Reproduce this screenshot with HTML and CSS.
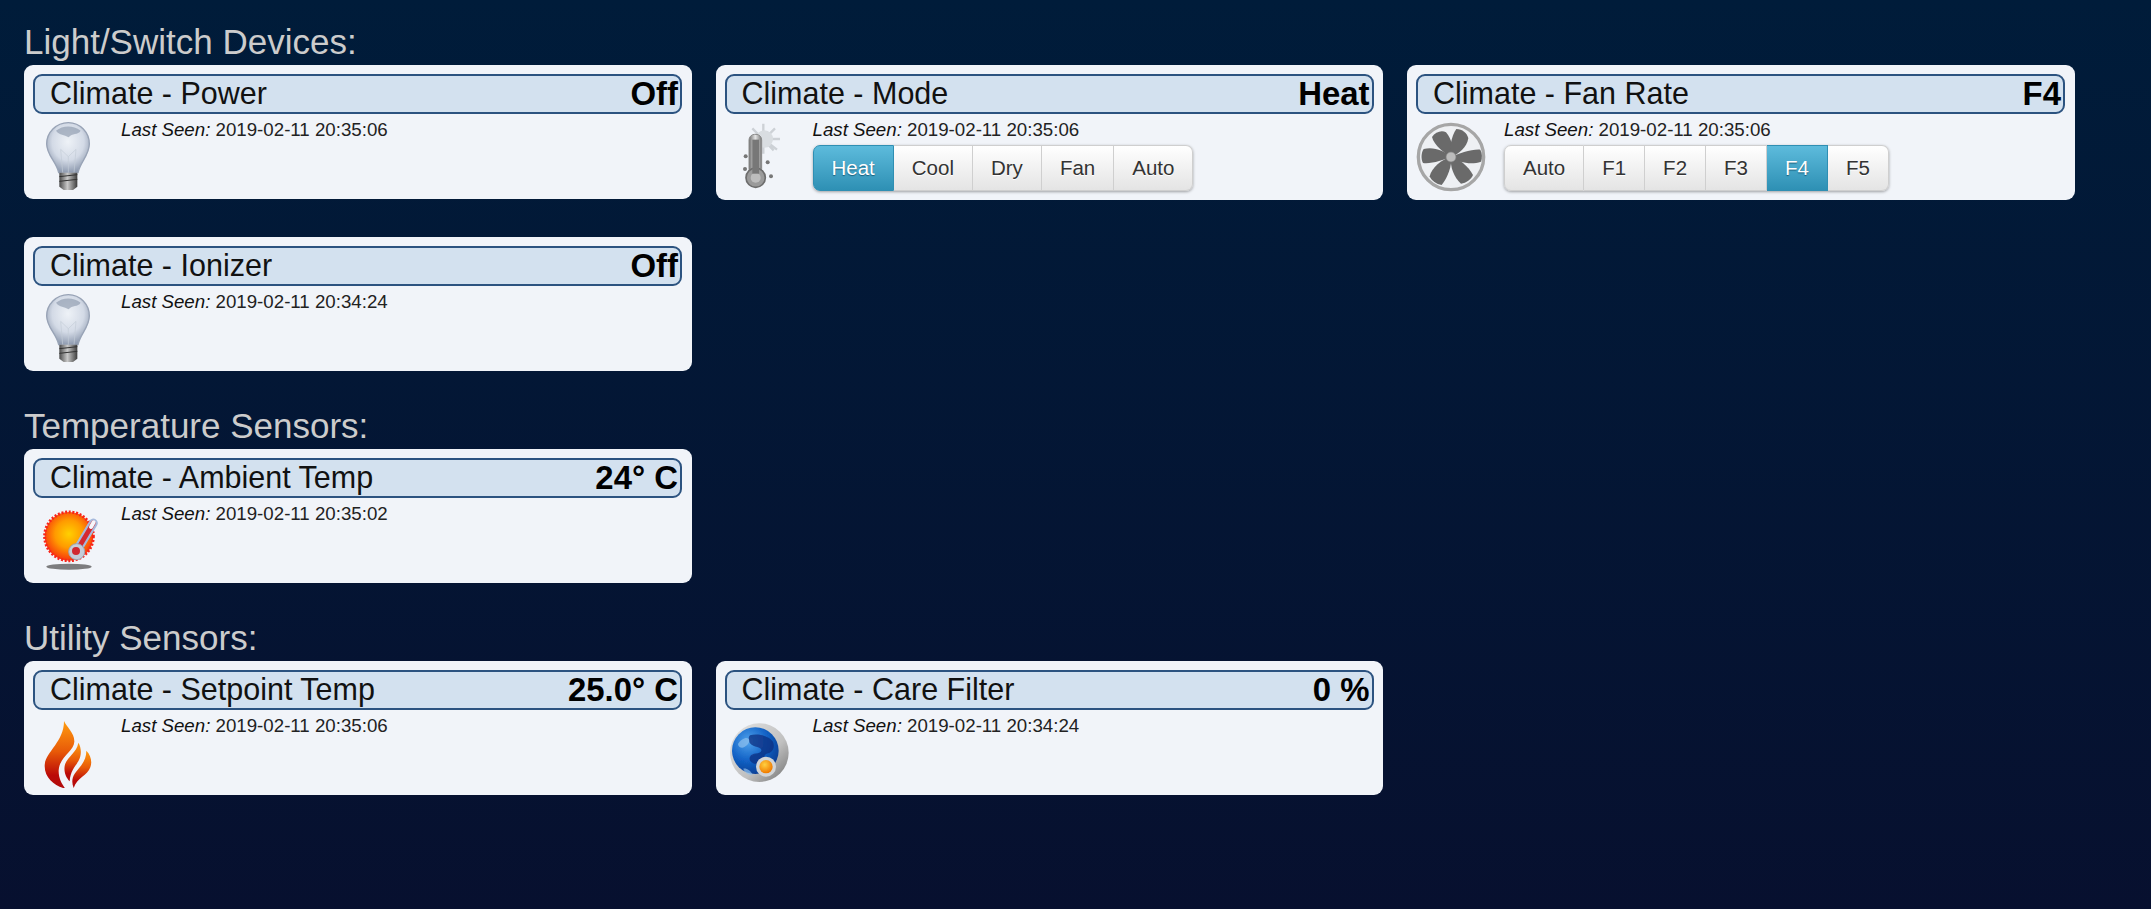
FILE: index.html
```html
<!DOCTYPE html>
<html lang="en">
<head>
<meta charset="utf-8">
<title>Climate</title>
<link rel="stylesheet" href="styles.css">
</head>
<body>
<svg class="defs" width="0" height="0" aria-hidden="true">
  <defs>
    <radialGradient id="glass" cx="50%" cy="38%" r="62%">
      <stop offset="0" stop-color="#eef2f7"/><stop offset=".6" stop-color="#d3dae6"/><stop offset="1" stop-color="#8f9bb0"/>
    </radialGradient>
    <linearGradient id="base" x1="0" x2="1" y1="0" y2="0">
      <stop offset="0" stop-color="#4a4a4a"/><stop offset=".45" stop-color="#c8c8c8"/><stop offset="1" stop-color="#3e3e3e"/>
    </linearGradient>
    <linearGradient id="tube" x1="0" x2="1" y1="0" y2="0">
      <stop offset="0" stop-color="#6e6e6e"/><stop offset=".5" stop-color="#e4e4e4"/><stop offset="1" stop-color="#777"/>
    </linearGradient>
    <radialGradient id="sunfill" cx="50%" cy="45%" r="52%">
      <stop offset="0" stop-color="#ffd000"/><stop offset=".55" stop-color="#ff9a00"/><stop offset="1" stop-color="#f8400c"/>
    </radialGradient>
    <linearGradient id="fire" x1="0" x2="0" y1="0" y2="1">
      <stop offset="0" stop-color="#ff9c10"/><stop offset=".45" stop-color="#e85a08"/><stop offset=".8" stop-color="#bb0a08"/><stop offset="1" stop-color="#b00c0c"/>
    </linearGradient>
    <radialGradient id="globe" cx="35%" cy="30%" r="75%">
      <stop offset="0" stop-color="#4fa2ec"/><stop offset=".55" stop-color="#1262c6"/><stop offset="1" stop-color="#0c3d92"/>
    </radialGradient>
    <linearGradient id="rim" x1="0" x2="1" y1="0" y2="1">
      <stop offset="0" stop-color="#e4e4e4"/><stop offset=".6" stop-color="#c0c0c0"/><stop offset="1" stop-color="#707070"/>
    </linearGradient>
    <radialGradient id="orange" cx="40%" cy="35%" r="65%">
      <stop offset="0" stop-color="#ffd040"/><stop offset="1" stop-color="#f07a00"/>
    </radialGradient>
    <filter id="soft" x="-10%" y="-10%" width="120%" height="120%"><feGaussianBlur stdDeviation="1.8"/></filter>
    <symbol id="bulb" viewBox="39 36 210 210">
      <g filter="url(#soft)">
        <path d="M145 38C108 38 80 68 80 102c0 34 30 54 36 86h58c6-32 34-52 34-86 0-34-27-64-63-64z" fill="url(#glass)" stroke="#98a3b6" stroke-width="4"/>
        <path d="M108 62c20-16 50-18 74 0-8 14-26 6-36 20-14-10-26-4-38-20z" fill="#8794a8" opacity=".6"/>
        <path d="M128 188l-6-70 23 22 23-22-6 70M145 140v48" fill="none" stroke="#c3cbd7" stroke-width="2"/>
        <path d="M118 188h54v42l-13 10h-28l-13-10z" fill="url(#base)"/>
        <path d="M118 200l54-6M118 214l54-6" stroke="#333" stroke-width="3"/>
      </g>
    </symbol>
  </defs>
</svg>

<section class="group">
  <h2 class="group-title">Light/Switch Devices:</h2>
  <div class="cards">
    <article class="card">
      <header class="bar"><span class="name">Climate - Power</span><span class="value">Off</span></header>
      <div class="body">
        <svg class="icon"><use href="#bulb"/></svg>
        <div class="info"><p class="seen"><em>Last Seen:</em> 2019-02-11 20:35:06</p></div>
      </div>
    </article>
    <article class="card">
      <header class="bar"><span class="name">Climate - Mode</span><span class="value">Heat</span></header>
      <div class="body">
        <svg class="icon" viewBox="0 21 210 210">
          <g filter="url(#soft)">
            <g stroke="#cdd1d6" stroke-width="7">
              <path d="M115 26v90M82 40l64 66M150 40l-60 60M165 72H90M156 104l-46-36"/>
            </g>
            <circle cx="118" cy="72" r="26" fill="#d9dde1"/>
            <rect x="72" y="58" width="38" height="120" rx="17" fill="url(#tube)" stroke="#8a8a8a" stroke-width="3"/>
            <circle cx="92" cy="188" r="29" fill="#9a9a9a" stroke="#6d6d6d" stroke-width="5"/>
            <circle cx="92" cy="188" r="15" fill="#bdbdbd"/>
            <rect x="82" y="74" width="20" height="102" fill="#777"/>
            <g fill="#777"><circle cx="62" cy="124" r="6"/><circle cx="60" cy="162" r="6"/><circle cx="128" cy="142" r="6"/><circle cx="138" cy="184" r="6"/></g>
          </g>
        </svg>
        <div class="info">
          <p class="seen"><em>Last Seen:</em> 2019-02-11 20:35:06</p>
          <div class="btns"><button class="btn on">Heat</button><button class="btn">Cool</button><button class="btn">Dry</button><button class="btn">Fan</button><button class="btn">Auto</button></div>
        </div>
      </div>
    </article>
    <article class="card">
      <header class="bar"><span class="name">Climate - Fan Rate</span><span class="value">F4</span></header>
      <div class="body">
        <svg class="icon" viewBox="18 21 210 210">
          <g filter="url(#soft)">
            <circle cx="123" cy="126" r="98" fill="#eef0f3" stroke="#a6a6a6" stroke-width="10"/>
            <g fill="#6a6a6a">
              <path d="M123 126C106 116 72 92 66 66c10-16 30-22 42-14 18 20 24 52 15 74z"/>
              <path d="M123 126c-6-22 0-62 16-84 18 0 32 12 36 28-4 26-28 48-52 56z"/>
              <path d="M123 126c22-10 62-24 88-22 6 12 6 24 2 36-28 10-66 4-90-14z"/>
              <path d="M123 126c22 2 52 28 66 54-6 14-20 24-36 26-20-16-34-52-30-80z"/>
              <path d="M123 126c4 24-10 62-28 84-16-2-30-12-36-26 6-26 36-52 64-58z"/>
              <path d="M123 126c-22 8-60 22-84 18-6-12-6-30 2-42 28-8 62 4 82 24z"/>
            </g>
            <circle cx="123" cy="126" r="15" fill="#bcbcbc" stroke="#808080" stroke-width="2"/>
          </g>
        </svg>
        <div class="info">
          <p class="seen"><em>Last Seen:</em> 2019-02-11 20:35:06</p>
          <div class="btns"><button class="btn">Auto</button><button class="btn">F1</button><button class="btn">F2</button><button class="btn">F3</button><button class="btn on">F4</button><button class="btn">F5</button></div>
        </div>
      </div>
    </article>
    <article class="card">
      <header class="bar"><span class="name">Climate - Ionizer</span><span class="value">Off</span></header>
      <div class="body">
        <svg class="icon"><use href="#bulb"/></svg>
        <div class="info"><p class="seen"><em>Last Seen:</em> 2019-02-11 20:34:24</p></div>
      </div>
    </article>
  </div>
</section>

<section class="group">
  <h2 class="group-title">Temperature Sensors:</h2>
  <div class="cards">
    <article class="card">
      <header class="bar"><span class="name">Climate - Ambient Temp</span><span class="value">24° C</span></header>
      <div class="body">
        <svg class="icon" viewBox="24 15 210 210">
          <ellipse cx="132" cy="197" rx="68" ry="9" fill="#555" opacity=".75" filter="url(#soft)"/>
          <circle cx="132" cy="106" r="73" fill="url(#sunfill)" stroke="#f8241c" stroke-width="9" stroke-dasharray="6 5"/>
          <path d="M155 150L205 66" stroke="#a6b9dc" stroke-width="27" stroke-linecap="round" fill="none"/>
          <path d="M155 150L205 66" stroke="#d52a30" stroke-width="14" stroke-linecap="round" fill="none"/>
          <path d="M198 78L206 64" stroke="#f6f6fa" stroke-width="12" stroke-linecap="round" fill="none"/>
          <circle cx="155" cy="152" r="24" fill="#c5ccd8" stroke="#9aa3b2" stroke-width="3"/>
          <circle cx="153" cy="150" r="12" fill="#d02830"/>
        </svg>
        <div class="info"><p class="seen"><em>Last Seen:</em> 2019-02-11 20:35:02</p></div>
      </div>
    </article>
  </div>
</section>

<section class="group">
  <h2 class="group-title">Utility Sensors:</h2>
  <div class="cards">
    <article class="card">
      <header class="bar"><span class="name">Climate - Setpoint Temp</span><span class="value">25.0° C</span></header>
      <div class="body">
        <svg class="icon" viewBox="24 6 210 210">
          <g fill="url(#fire)">
            <path d="M117 15c8 18 32 36 31 62-2 30-44 44-47 86-1 24 10 42 20 55-30-8-62-30-62-68 0-42 58-70 58-135z"/>
            <path d="M160 80c10 16 10 38 0 56-10 16-24 30-26 60-10-10-18-26-15-46 4-26 36-38 41-70z"/>
            <path d="M184 104c14 14 18 34 12 50-8 24-40 32-50 62-6-14-6-30 4-44 12-18 34-34 34-68z"/>
          </g>
        </svg>
        <div class="info"><p class="seen"><em>Last Seen:</em> 2019-02-11 20:35:06</p></div>
      </div>
    </article>
    <article class="card">
      <header class="bar"><span class="name">Climate - Care Filter</span><span class="value">0 %</span></header>
      <div class="body">
        <svg class="icon" viewBox="15 6 210 210">
          <g filter="url(#soft)">
            <circle cx="118" cy="110" r="88" fill="url(#rim)"/>
            <circle cx="106" cy="104" r="70" fill="url(#globe)"/>
            <path d="M90 58c20-6 56 0 68 18 8 14 2 32-14 36-16 2-10 26-30 32-16 2-30-10-24-22 6-14 30-6 34-18 2-12-22-8-34-22-4-8-6-18 0-24z" fill="#0e2f80" opacity=".75"/>
            <path d="M54 84c8-14 24-22 32-16 6 10-4 20-14 26-8 4-18-2-18-10zM70 158c10-2 22 6 28 18-12 2-24-6-28-18z" fill="#8fc0ee" opacity=".7"/>
            <circle cx="138" cy="152" r="30" fill="#d2d4d6"/>
            <circle cx="138" cy="152" r="20" fill="url(#orange)"/>
          </g>
        </svg>
        <div class="info"><p class="seen"><em>Last Seen:</em> 2019-02-11 20:34:24</p></div>
      </div>
    </article>
  </div>
</section>
</body>
</html>
```

FILE: styles.css
```css
* { box-sizing: border-box; }
html { height: 100%; }
body {
  margin: 0;
  min-height: 100%;
  padding: 24px 0 0 24px;
  font-family: "Liberation Sans", Arial, sans-serif;
  color: #111;
  background: linear-gradient(to bottom, #001c3a 0%, #07102f 100%);
  overflow: hidden;
}
.defs { display: block; }
.group-title {
  margin: 0;
  height: 41px;
  line-height: 35px;
  font-size: 35px;
  font-weight: 400;
  color: #cccccc;
}
.cards {
  display: flex;
  flex-wrap: wrap;
  align-items: flex-start;
  column-gap: 24px;
  row-gap: 37px;
  width: 2080px;
  margin-bottom: 37.5px;
}
.card {
  width: 667.5px;
  padding: 9px 9.5px 6.5px 9px;
  background: #f1f4f9;
  border-radius: 9px;
}
.bar {
  display: flex;
  justify-content: space-between;
  align-items: center;
  height: 40px;
  padding: 0 2px 0 15px;
  background: #d3e1ef;
  border: 2px solid #2c5380;
  border-radius: 9px;
}
.name { font-size: 30.5px; color: #111; padding-bottom: 2px; }
.value { font-size: 32.9px; font-weight: 700; color: #000; }
.body { display: flex; align-items: flex-start; }
.icon { width: 70px; height: 70px; margin-top: 8px; flex: none; }
.info { margin-left: 18px; padding-top: 5px; }
.seen { margin: 0; font-size: 18.7px; line-height: 22px; color: #222; }
.seen em { color: #111; }
.btns {
  display: flex;
  margin: 4px 0 2.5px;
  height: 46px;
  border-radius: 7px;
  box-shadow: 0 1px 3px rgba(0, 0, 0, .35);
}
.btn {
  height: 46px;
  padding: 0 18px;
  font: 20.5px "Liberation Sans", Arial, sans-serif;
  color: #333;
  text-shadow: 0 1px 0 #fff;
  background: linear-gradient(#fff, #e4e4e4);
  border: 1px solid #cfcfcf;
  border-left-width: 0;
}
.btn:first-child { border-left-width: 1px; border-radius: 7px 0 0 7px; }
.btn:last-child { border-radius: 0 7px 7px 0; }
.btn.on {
  color: #fff;
  text-shadow: 0 1px 1px #1b5f7c;
  background: linear-gradient(#5dbbdc, #2e90b4);
  border-color: #2f8fb3;
}
```
